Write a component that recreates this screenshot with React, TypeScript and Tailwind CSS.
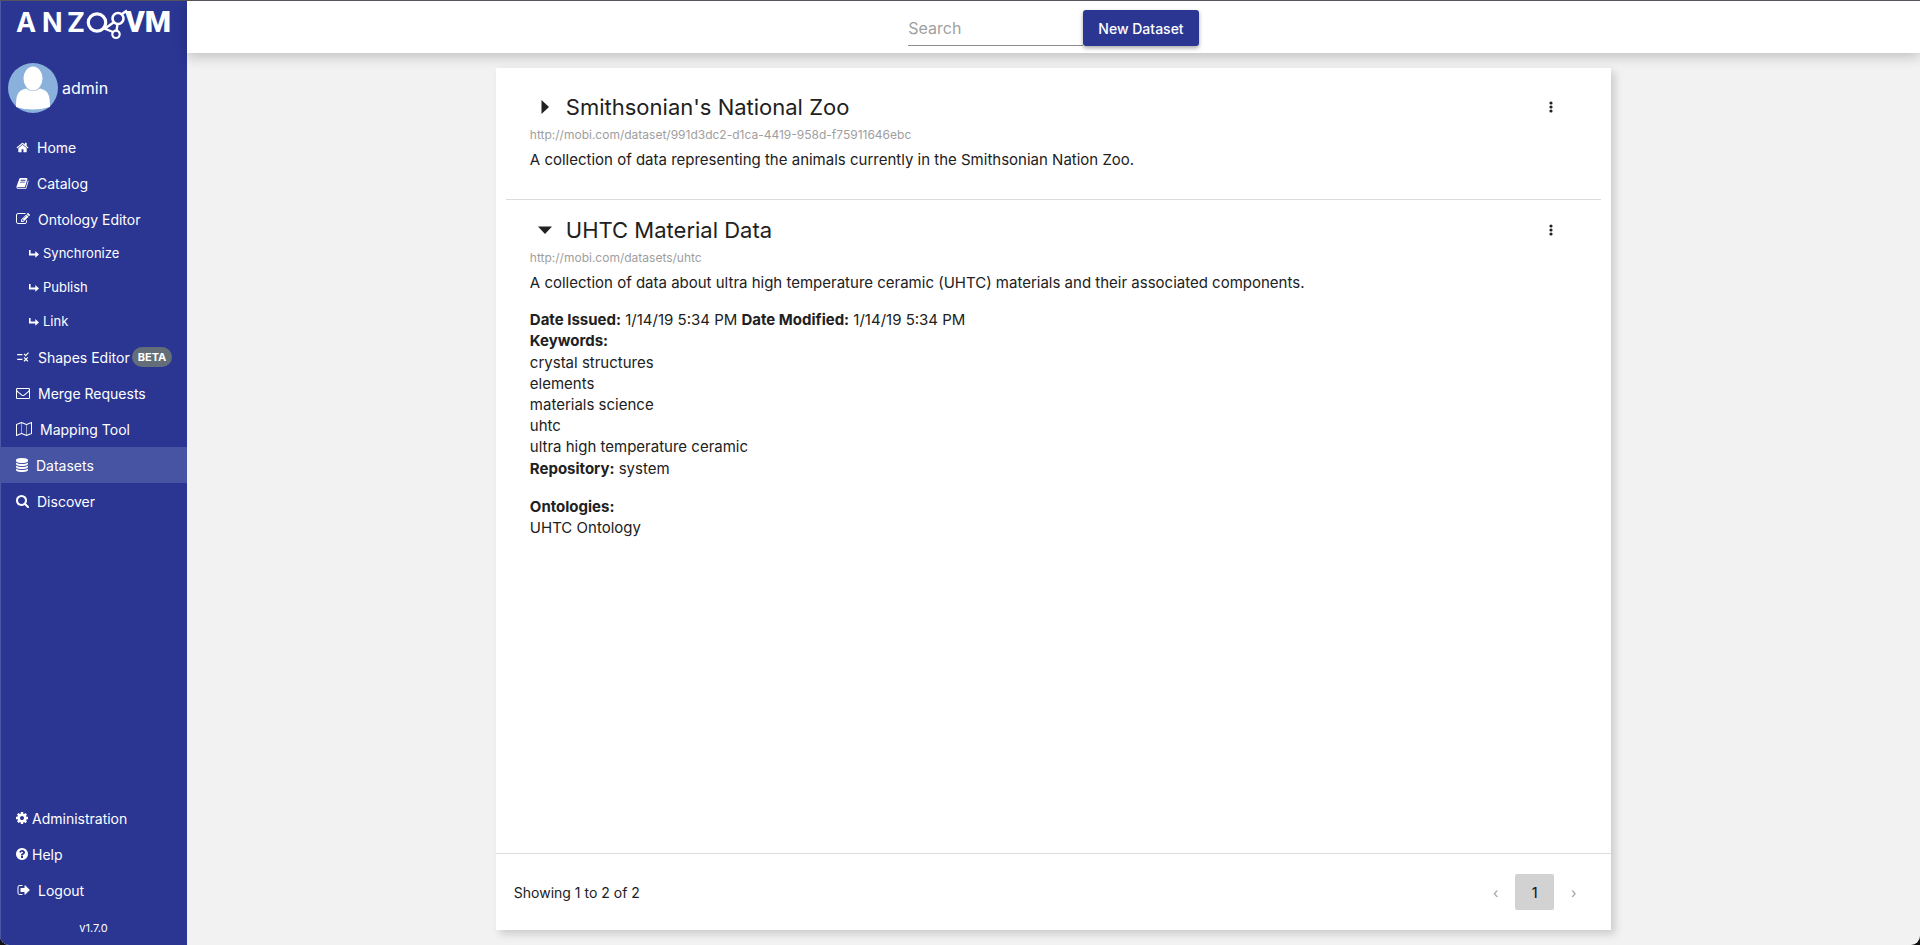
import React from "react";
import { MdRule } from "react-icons/md";

type GlyphProps = { d: string; className: string; viewBox?: string };

function Glyph({ d, className, viewBox = "0 0 1792 1792" }: GlyphProps) {
  return (
    <svg viewBox={viewBox} className={className} fill="currentColor" aria-hidden="true">
      <path d={d} />
    </svg>
  );
}

const paths = {
  home: "M1472 992v480q0 26-19 45t-45 19h-384v-384h-256v384h-384q-26 0-45-19t-19-45v-480q0-1 .5-3t.5-3l575-474 575 474q1 2 1 6zm223-69l-62 74q-8 9-21 11h-3q-13 0-21-7l-692-577-692 577q-12 8-24 7-13-2-21-11l-62-74q-8-10-7-23.5t11-21.5l719-599q32-26 76-26t76 26l244 204v-195q0-14 9-23t23-9h192q14 0 23 9t9 23v408l219 182q10 8 11 21.5t-7 23.5z",
  book: "M1703 478q40 57 18 129l-275 906q-19 64-76.5 107.5t-122.5 43.5h-923q-77 0-148.5-53.5t-99.5-131.5q-24-67-2-127 0-4 3-27t4-37q1-8-3-21.5t-3-19.5q2-11 8-21t16.5-23.5 16.5-23.5q23-38 45-91.5t30-91.5q3-10 .5-30t-.5-28q3-11 17-28t17-23q21-36 42-92t25-90q1-9-2.5-32t.5-28q4-13 22-30.5t22-22.5q19-26 42.5-84.5t27.5-96.5q1-8-3-25.5t-2-26.5q2-8 9-18t18-23 17-21q8-12 16.5-30.5t15-35 16-36 19.5-32 26.5-23.5 36-11.5 47.5 5.5l-1 3q38-9 51-9h761q74 0 114 56t18 130l-274 906q-36 119-71.5 153.5t-128.5 34.5h-869q-27 0-38 15-11 16-1 43 24 70 144 70h923q29 0 56-15.5t35-41.5l300-987q7-22 5-57 38 15 59 43zm-1064 2q-4 13 2 22.5t20 9.5h608q13 0 25.5-9.5t16.5-22.5l21-64q4-13-2-22.5t-20-9.5h-608q-13 0-25.5 9.5t-16.5 22.5zm-83 256q-4 13 2 22.5t20 9.5h608q13 0 25.5-9.5t16.5-22.5l21-64q4-13-2-22.5t-20-9.5h-608q-13 0-25.5 9.5t-16.5 22.5z",
  edit: "M888 1184l116-116-152-152-116 116v56h96v96h56zm440-720q-16-16-33 1l-350 350q-17 17-1 33t33-1l350-350q17-17 1-33zm80 594v190q0 119-84.5 203.5t-203.5 84.5h-832q-119 0-203.5-84.5t-84.5-203.5v-832q0-119 84.5-203.5t203.5-84.5h832q63 0 117 25 15 7 18 23 3 17-9 29l-49 49q-14 14-32 8-23-6-45-6h-832q-66 0-113 47t-47 113v832q0 66 47 113t113 47h832q66 0 113-47t47-113v-126q0-13 9-22l64-64q15-15 35-7t20 29zm-96-738l288 288-672 672h-288v-288zm444 132l-92 92-288-288 92-92q28-28 68-28t68 28l152 152q28 28 28 68t-28 68z",
  mail: "M1664 1504v-768q-32 36-69 66-268 206-426 338-51 43-83 67t-86.5 48.5-102.5 24.5h-2q-48 0-102.5-24.5t-86.5-48.5-83-67q-158-132-426-338-37-30-69-66v768q0 13 9.5 22.5t22.5 9.5h1472q13 0 22.5-9.5t9.5-22.5zm0-1051v-24.5l-.5-13-3-12.5-5.5-9-9-7.5-14-2.5h-1472q-13 0-22.5 9.5t-9.5 22.5q0 168 147 284 193 152 401 317 6 5 35 29.5t46 37.5 44.5 31.5 50.5 27.5 43 9h2q20 0 43-9t50.5-27.5 44.5-31.5 46-37.5 35-29.5q208-165 401-317 54-43 100.5-115.5t46.5-131.5zm128-37v1088q0 66-47 113t-113 47h-1472q-66 0-113-47t-47-113v-1088q0-66 47-113t113-47h1472q66 0 113 47t47 113z",
  map: "M2020 11q28 20 28 53v1408q0 20-11 36t-29 23l-640 256q-24 11-48 0l-616-246-616 246q-10 5-24 5-19 0-36-11-28-20-28-53v-1408q0-20 11-36t29-23l640-256q24-11 48 0l616 246 616-246q32-13 60 6zm-1284 135v1270l576 230v-1270zm-608 217v1270l544-217v-1270zm1792 1066v-1270l-544 217v1270z",
  database: "M896 768q237 0 443-43t325-127v170q0 69-103 128t-280 93.5-385 34.5-385-34.5-280-93.5-103-128v-170q119 84 325 127t443 43zm0 768q237 0 443-43t325-127v170q0 69-103 128t-280 93.5-385 34.5-385-34.5-280-93.5-103-128v-170q119 84 325 127t443 43zm0-384q237 0 443-43t325-127v170q0 69-103 128t-280 93.5-385 34.5-385-34.5-280-93.5-103-128v-170q119 84 325 127t443 43zm0-1152q208 0 385 34.5t280 93.5 103 128v128q0 69-103 128t-280 93.5-385 34.5-385-34.5-280-93.5-103-128v-128q0-69 103-128t280-93.5 385-34.5z",
  search: "M1216 832q0-185-131.5-316.5t-316.5-131.5-316.5 131.5-131.5 316.5 131.5 316.5 316.5 131.5 316.5-131.5 131.5-316.5zm512 832q0 52-38 90t-90 38q-54 0-90-38l-343-342q-179 124-399 124-143 0-273.5-55.5t-225-150-150-225-55.5-273.5 55.5-273.5 150-225 225-150 273.5-55.5 273.5 55.5 225 150 150 225 55.5 273.5q0 220-124 399l343 343q37 37 37 90z",
  cog: "M1152 896q0-106-75-181t-181-75-181 75-75 181 75 181 181 75 181-75 75-181zm512-109v222q0 12-8 23t-20 13l-185 28q-19 54-39 91 35 50 107 138 10 12 10 25t-9 23q-27 37-99 108t-94 71q-12 0-26-9l-138-108q-44 23-91 38-16 136-29 186-7 28-36 28h-222q-14 0-24.5-8.5t-11.5-21.5l-28-184q-49-16-90-37l-141 107q-10 9-25 9-14 0-25-11-126-114-165-168-7-10-7-23 0-12 8-23 15-21 51-66.5t54-70.5q-27-50-41-99l-183-27q-13-2-21-12.5t-8-23.5v-222q0-12 8-23t19-13l186-28q14-46 39-92-40-57-107-138-10-12-10-24 0-10 9-23 26-36 98.5-107.5t94.5-71.5q13 0 26 10l138 107q44-23 91-38 16-136 29-186 7-28 36-28h222q14 0 24.5 8.5t11.5 21.5l28 184q49 16 90 37l142-107q9-9 24-9 13 0 25 10 129 119 165 170 7 8 7 22 0 12-8 23-15 21-51 66.5t-54 70.5q26 50 41 98l183 28q13 2 21 12.5t8 23.5z",
  help: "M1024 1376v-192q0-14-9-23t-23-9h-192q-14 0-23 9t-9 23v192q0 14 9 23t23 9h192q14 0 23-9t9-23zm256-672q0-88-55.5-163t-138.5-116-170-41q-243 0-371 213-15 24 8 42l132 100q7 6 19 6 16 0 25-12 53-68 86-92 34-24 86-24 48 0 85.5 26t37.5 59q0 38-20 61t-68 45q-63 28-115.5 86.5t-52.5 125.5v36q0 14 9 23t23 9h192q14 0 23-9t9-23q0-19 21.5-49.5t54.5-49.5q32-18 49-28.5t46-35 44.5-48 28-60.5 12.5-81zm384 192q0 209-103 385.5t-279.5 279.5-385.5 103-385.5-103-279.5-279.5-103-385.5 103-385.5 279.5-279.5 385.5-103 385.5 103 279.5 279.5 103 385.5z",
  logout: "M704 1440q0 4 1 20t.5 26.5-3 23.5-10 19.5-20.5 6.5h-320q-119 0-203.5-84.5t-84.5-203.5v-704q0-119 84.5-203.5t203.5-84.5h320q13 0 22.5 9.5t9.5 22.5q0 4 1 20t.5 26.5-3 23.5-10 19.5-20.5 6.5h-320q-66 0-113 47t-47 113v704q0 66 47 113t113 47h312l11.5 1 11.5 3 8 5.5 7 9 2 13.5zm928-544q0 26-19 45l-544 544q-19 19-45 19t-45-19-19-45v-288h-448q-26 0-45-19t-19-45v-384q0-26 19-45t45-19h448v-288q0-26 19-45t45-19 45 19l544 544q19 19 19 45z",
};

function Logo() {
  return (
    <svg viewBox="0 1 187 42" className="h-[42px] w-full" fill="#fff" role="img" aria-label="ANZO VM">
      <text y="32" fontFamily="Inter, sans-serif" fontWeight="700" fontSize="27">
        <tspan x="16">A</tspan>
        <tspan x="42">N</tspan>
        <tspan x="67">Z</tspan>
      </text>
      <g fill="none" stroke="#fff">
        <circle cx="97" cy="22.500" r="8.700" strokeWidth="3.200" />
        <circle cx="118" cy="18.500" r="5.500" strokeWidth="2.600" />
        <circle cx="116" cy="34.300" r="3.700" strokeWidth="2.200" />
        <path d="M103 28L113 32M117.500 24L116.500 31M122 14L127 10.500M105 28.500L113.500 22.500" strokeWidth="2.400" />
      </g>
      <text x="125" y="32" fontFamily="Roboto, sans-serif" fontWeight="900" fontSize="30">VM</text>
    </svg>
  );
}

function Avatar() {
  return (
    <svg viewBox="0 0 50 50" className="size-[50px]" aria-hidden="true">
      <circle cx="25" cy="25" r="25" fill="#8ab1dc" />
      <ellipse cx="25" cy="15.500" rx="9.500" ry="12" fill="#fff" />
      <path d="M8 44C8 33 9 27.500 18 25.500q7 5 14 0C41 27.500 42 33 42 44Q25 49 8 44z" fill="#fff" />
    </svg>
  );
}

type Item = { label: string; icon: React.ReactNode; gap: string; active?: boolean; beta?: boolean; sub?: boolean };

const subIcon = (
  <svg viewBox="0 0 10 8" className="h-2 w-2.5" fill="currentColor" aria-hidden="true">
    <path d="M0 0h1.600v3.600H6.300V1L10 4.400 6.300 7.800V5.400H0z" />
  </svg>
);

const items: Item[] = [
  { label: "Home", gap: "gap-2", icon: <Glyph d={paths.home} className="size-[13px]" /> },
  { label: "Catalog", gap: "gap-2", icon: <Glyph d={paths.book} className="size-[13px]" /> },
  { label: "Ontology Editor", gap: "gap-2", icon: <Glyph d={paths.edit} className="size-[14px]" /> },
  { label: "Synchronize", gap: "gap-1", icon: subIcon, sub: true },
  { label: "Publish", gap: "gap-1", icon: subIcon, sub: true },
  { label: "Link", gap: "gap-1", icon: subIcon, sub: true },
  { label: "Shapes Editor", gap: "gap-2", icon: <MdRule className="size-[14px]" aria-hidden="true" />, beta: true },
  { label: "Merge Requests", gap: "gap-2", icon: <Glyph d={paths.mail} className="size-[14px]" /> },
  { label: "Mapping Tool", gap: "gap-2", icon: <Glyph d={paths.map} viewBox="0 0 2048 1792" className="h-[14px] w-4" /> },
  { label: "Datasets", gap: "gap-2", icon: <Glyph d={paths.database} viewBox="128 0 1536 1792" className="h-[14px] w-3" />, active: true },
  { label: "Discover", gap: "gap-2", icon: <Glyph d={paths.search} viewBox="64 128 1664 1664" className="size-[13px]" /> },
];

const footerItems: Item[] = [
  { label: "Administration", gap: "gap-1", icon: <Glyph d={paths.cog} viewBox="128 128 1536 1536" className="size-3" /> },
  { label: "Help", gap: "gap-1", icon: <Glyph d={paths.help} viewBox="128 128 1536 1536" className="size-3" /> },
  { label: "Logout", gap: "gap-2", icon: <Glyph d={paths.logout} viewBox="-128 0 1792 1792" className="size-[14px]" /> },
];

function NavItem({ item }: { item: Item }) {
  const size = item.sub ? "h-[34px] pl-[29px] text-[13px]" : "h-9 pl-4 text-[14px]";
  return (
    <li>
      <a
        href="#"
        className={`flex items-center whitespace-nowrap ${size} ${item.gap} ${item.active ? "bg-[#4753a3]" : ""}`}
      >
        {item.icon}
        <span>{item.label}</span>
        {item.beta && (
          <span className="-ml-1.5 rounded-full bg-[#646e78] px-1.5 text-[11px] leading-5 font-bold">BETA</span>
        )}
      </a>
    </li>
  );
}

function Sidebar() {
  return (
    <aside className="flex w-[187px] shrink-0 flex-col bg-[#2b3693] text-white shadow-[inset_1px_0_0_#4c57a5]">
      <Logo />
      <div className="mt-5 flex items-center gap-1 pl-2 text-[16px]">
        <Avatar />
        <span>admin</span>
      </div>
      <nav className="mt-4 flex grow flex-col justify-between">
        <ul>{items.map((i) => <NavItem key={i.label} item={i} />)}</ul>
        <ul>{footerItems.map((i) => <NavItem key={i.label} item={i} />)}</ul>
      </nav>
      <p className="pt-2.5 pb-[7px] text-center text-[11px] leading-5">v1.7.0</p>
    </aside>
  );
}

type DatasetProps = { title: string; iri: string; description: string; open?: boolean; children?: React.ReactNode };

function Dataset({ title, iri, description, open, children }: DatasetProps) {
  return (
    <section className="px-6 pt-[15px] pb-7">
      <div className="flex h-[30px] items-center">
        <button type="button" aria-label="Toggle details" aria-expanded={!!open} className="flex w-9 items-center pl-[7px]">
          <svg viewBox="0 0 16 16" className="size-4" fill="currentColor" aria-hidden="true">
            <path d={open ? "M1 4.500h14L8 12z" : "M4.500 1v14L12 8z"} />
          </svg>
        </button>
        <h2 className="grow text-[22px]">{title}</h2>
        <button type="button" aria-label="Dataset actions" className="mr-4 p-1">
          <svg viewBox="0 0 12 12" className="size-3" fill="currentColor" aria-hidden="true">
            <circle cx="6" cy="2" r="1.600" />
            <circle cx="6" cy="6" r="1.600" />
            <circle cx="6" cy="10" r="1.600" />
          </svg>
        </button>
      </div>
      <p className="mt-[3px] text-[12px] leading-5 text-[#9e9e9e]">{iri}</p>
      <p className="mt-1 leading-[22px]">{description}</p>
      {children}
    </section>
  );
}

const keywords = ["crystal structures", "elements", "materials science", "uhtc", "ultra high temperature ceramic"];

export default function App() {
  return (
    <div className="bg-[#111]">
      <div className="flex min-h-screen overflow-hidden rounded-b-[9px] border-t border-[#55545c] bg-[#f2f2f2] font-['Inter',sans-serif] text-[#212121]">
        <Sidebar />
        <div className="flex min-w-0 grow flex-col">
          <header className="flex h-[52px] shrink-0 items-center justify-center bg-white pt-0.5 shadow-[0_4px_12px_rgba(0,0,0,0.2)]">
            <input
              type="search"
              aria-label="Search"
              placeholder="Search"
              className="h-9 w-[175px] border-b border-[#8c8c8c] text-[16px] outline-none placeholder:text-[#a0a0a0]"
            />
            <button
              type="button"
              className="h-9 rounded-[3px] bg-[#2b3693] px-[15px] text-[14px] font-medium text-white shadow-[0_2px_4px_rgba(0,0,0,0.35)]"
            >
              New Dataset
            </button>
          </header>
          <main className="flex w-8/12 grow flex-col self-center px-5 py-[15px]">
            <div className="flex grow flex-col bg-white shadow-[4px_4px_8px_rgba(0,0,0,0.16)]">
              <div className="grow px-2.5 pt-[9px] text-[15px] leading-[21px]">
                <Dataset
                  title="Smithsonian's National Zoo"
                  iri="http://mobi.com/dataset/991d3dc2-d1ca-4419-958d-f75911646ebc"
                  description="A collection of data representing the animals currently in the Smithsonian Nation Zoo."
                />
                <hr className="border-[#dcdcdc]" />
                <Dataset
                  open
                  title="UHTC Material Data"
                  iri="http://mobi.com/datasets/uhtc"
                  description="A collection of data about ultra high temperature ceramic (UHTC) materials and their associated components."
                >
                  <div className="mt-[15px]">
                    <p>
                      <strong>Date Issued:</strong> 1/14/19 5:34 PM <strong>Date Modified:</strong> 1/14/19 5:34 PM
                    </p>
                    <p className="font-bold">Keywords:</p>
                    <ul className="py-px">{keywords.map((k) => <li key={k}>{k}</li>)}</ul>
                    <p>
                      <strong>Repository:</strong> system
                    </p>
                  </div>
                  <div className="mt-[17px]">
                    <p className="font-bold">Ontologies:</p>
                    <p>UHTC Ontology</p>
                  </div>
                </Dataset>
              </div>
              <footer className="flex items-center justify-between border-t border-[#dcdcdc] px-[18px] py-5 text-[14px]">
                <span>Showing 1 to 2 of 2</span>
                <div className="flex items-center">
                  <button type="button" disabled aria-label="Previous page" className="h-9 w-[39px] text-[#9e9e9e]">‹</button>
                  <button type="button" className="h-9 w-[39px] rounded-[2px] bg-[#d2d2d2] font-medium">1</button>
                  <button type="button" disabled aria-label="Next page" className="h-9 w-[39px] text-[#9e9e9e]">›</button>
                </div>
              </footer>
            </div>
          </main>
        </div>
      </div>
    </div>
  );
}
